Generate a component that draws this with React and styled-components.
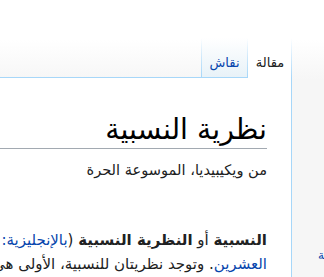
import React from "react";
import styled, { createGlobalStyle } from "styled-components";

const GlobalStyle = createGlobalStyle`
  html, body {
    margin: 0;
    padding: 0;
    background: #f6f6f6;
  }
  body {
    font-family: "DejaVu Sans", sans-serif;
    color: #202122;
  }
`;

const Page = styled.div`
  direction: rtl;
  display: flex;
  min-height: 100vh;
  overflow: hidden;
  background: linear-gradient(to bottom, #ffffff 40px, #f6f6f6 80px);
`;

const Sidebar = styled.div`
  flex: 1;
  direction: ltr;
  overflow: hidden;
  white-space: nowrap;
  padding-top: 248px;
  padding-left: 26px;
  font-size: 12px;
`;

const SideLink = styled.a`
  color: #0645ad;
  text-decoration: none;
`;

const Main = styled.div`
  width: 292px;
  flex: none;
  display: flex;
  flex-direction: column;
`;

const TabBar = styled.div`
  display: flex;
  height: 40px;
  margin-top: 38px;
`;

const Tab = styled.div`
  box-sizing: border-box;
  width: ${(p) => p.$width}px;
  padding-top: 17px;
  text-align: center;
  font-size: 13px;
  line-height: 16px;
  color: ${(p) => (p.$selected ? "#202122" : "#0645ad")};
  background: ${(p) =>
    p.$selected
      ? "linear-gradient(to bottom, rgba(167,215,249,0), #a7d7f9) right top / 1px 100% no-repeat, #ffffff"
      : "linear-gradient(to bottom, rgba(167,215,249,0), #a7d7f9) left top / 1px 100% no-repeat, linear-gradient(to bottom, rgba(167,215,249,0), #a7d7f9) right top / 1px 100% no-repeat, linear-gradient(to bottom, #ffffff 0%, #e8f2f8 100%)"};
  border-bottom: ${(p) => (p.$selected ? "none" : "1px solid #a7d7f9")};
`;

const TabFill = styled.div`
  flex: 1;
  border-bottom: 1px solid #a7d7f9;
`;

const Content = styled.div`
  flex: 1;
  background: #ffffff;
  border-right: 1px solid #a7d7f9;
  padding: 33px 24px 0 0;
  overflow: hidden;
`;

const Heading = styled.h1`
  margin: 0 0 0 -40px;
  font-family: "DejaVu Sans", sans-serif;
  font-weight: normal;
  font-size: 28.4px;
  line-height: 37px;
  color: #000;
  border-bottom: 1px solid #a2a9b1;
`;

const SiteSub = styled.div`
  margin-top: 12px;
  font-size: 14.6px;
  line-height: 18px;
  color: #202122;
`;

const Paragraph = styled.p`
  margin: 49px 0 0;
  font-size: 15px;
  line-height: 24px;
  white-space: nowrap;
`;

const Link = styled.a`
  color: #0645ad;
  text-decoration: none;
`;

export default function App() {
  return (
    <>
      <GlobalStyle />
      <Page>
        <Sidebar>
          <SideLink>صفحة عشوائية</SideLink>
        </Sidebar>
        <Main>
          <TabBar>
            <Tab $selected $width={44}>مقالة</Tab>
            <Tab $width={47}>نقاش</Tab>
            <TabFill />
          </TabBar>
          <Content>
            <Heading>نظرية النسبية</Heading>
            <SiteSub>من ويكيبيديا، الموسوعة الحرة</SiteSub>
            <Paragraph>
              <b>النسبية</b> أو <b>النظرية النسبية</b> (<Link>بالإنجليزية:</Link> Theory of
              relativity) هي نظرية فيزيائية ظهرت في بداية القرن
              <br />
              <Link>العشرين</Link>. وتوجد نظريتان للنسبية، الأولى هي النسبية الخاصة
            </Paragraph>
          </Content>
        </Main>
      </Page>
    </>
  );
}
